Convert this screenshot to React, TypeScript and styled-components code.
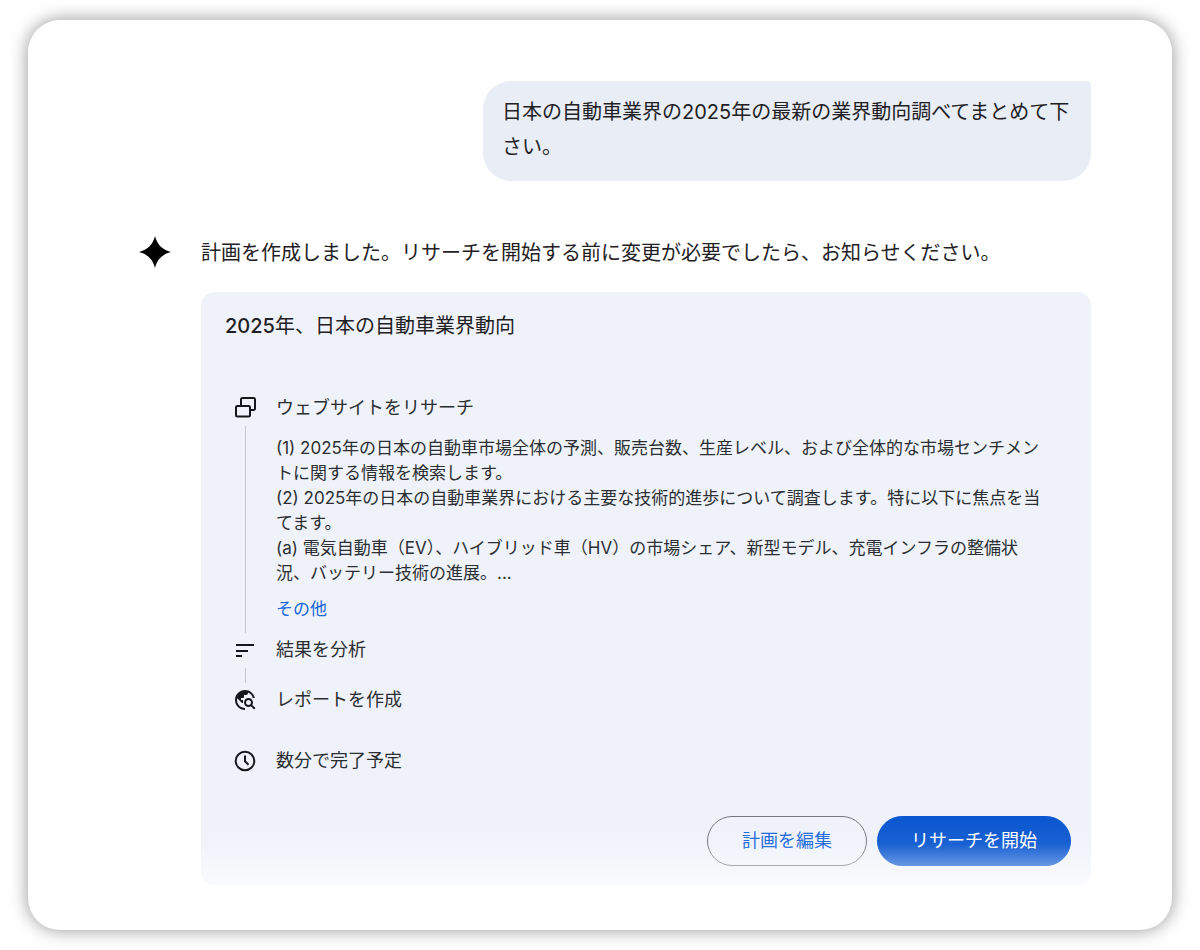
import React from "react";
import styled, { createGlobalStyle } from "styled-components";
import { MdTravelExplore } from "react-icons/md";

const GlobalStyle = createGlobalStyle`
  *, *::before, *::after { box-sizing: border-box; }
  body {
    margin: 0;
    background: #fff;
    color: #1f2124;
    font-family: Inter, "Noto Sans CJK JP", sans-serif;
    font-weight: 370;
  }
`;

const Page = styled.div`
  display: flex;
  flex-direction: column;
  min-height: 100vh;
  padding: 20px 28px;
`;

const Frame = styled.main`
  flex: 1;
  display: flex;
  flex-direction: column;
  padding: 61px 81px 45px 111px;
  border-radius: 32px;
  background: #fff;
  box-shadow: 0 0 18px rgba(0, 0, 0, 0.42);
`;

const UserMessage = styled.p`
  align-self: flex-end;
  max-width: 608px;
  margin: 0;
  padding: 14px 16px 16px 19px;
  border-radius: 28px 4px 28px 28px;
  background: #e8edf6;
  font-size: 20px;
  line-height: 35px;
`;

const Reply = styled.section`
  display: grid;
  grid-template-columns: 32px 1fr;
  column-gap: 30px;
  margin-top: 55px;
`;

const Spark = styled.svg`
  width: 32px;
  height: 32px;
`;

const Intro = styled.p`
  margin: 0 0 22px;
  font-size: 20px;
  line-height: 34px;
`;

const PlanCard = styled.article`
  position: relative;
  grid-column: 2;
  padding: 19px 20px 19px 24px;
  border-radius: 14px;
  background: #eff3f9;
  overflow: hidden;
`;

const Fade = styled.div`
  position: absolute;
  inset: auto 0 0;
  height: 66px;
  background: linear-gradient(
    rgba(255, 255, 255, 0),
    rgba(255, 255, 255, 0.06) 38%,
    rgba(255, 255, 255, 0.65)
  );
  pointer-events: none;
`;

const Title = styled.h2`
  margin: 0 0 55px;
  font-size: 20px;
  font-weight: 370;
  line-height: 30px;
`;

const Year = styled.span`
  font-weight: 500;
`;

const Steps = styled.ol`
  margin: 0;
  padding: 0;
  list-style: none;
`;

const Row = styled.li`
  display: grid;
  grid-template-columns: 24px 1fr;
  column-gap: 19px;
  padding-left: 8px;
`;

const Rail = styled.div`
  display: flex;
  flex-direction: column;
  align-items: center;

  svg {
    flex: none;
    width: 24px;
    height: 24px;
  }
`;

const Connector = styled.span`
  flex: 1;
  width: 1px;
  margin: 6px 0 5px;
  background: #c4c7cc;
`;

const StepBody = styled.div<{ $space: number }>`
  padding-bottom: ${(p) => p.$space}px;
`;

const Label = styled.h3`
  margin: 0;
  color: #2b2e32;
  font-size: 18px;
  font-weight: 370;
  line-height: 24px;
`;

const Detail = styled.p`
  margin: 16px 0 11px;
  color: #2b2e32;
  font-size: 17px;
  line-height: 25px;
`;

const MoreButton = styled.button`
  display: block;
  padding: 0;
  border: 0;
  background: none;
  color: #1a66dc;
  font: inherit;
  font-size: 17px;
  line-height: 24px;
  cursor: pointer;
`;

const Estimate = styled(Row).attrs({ as: "div" })`
  margin: 37px 0 43px;
`;

const Actions = styled.div`
  display: flex;
  justify-content: flex-end;
  gap: 10px;
`;

const ActionButton = styled.button<{ $primary?: boolean }>`
  min-width: 160px;
  height: 50px;
  padding: 0 33px;
  border: 1px solid ${(p) => (p.$primary ? "#0b57d0" : "#74777a")};
  border-radius: 25px;
  background: ${(p) => (p.$primary ? "#0b57d0" : "transparent")};
  color: ${(p) => (p.$primary ? "#fff" : "#1a66dc")};
  font: inherit;
  font-size: 18px;
  line-height: 24px;
  cursor: pointer;
`;

const WindowsIcon = () => (
  <svg viewBox="0 0 24 24" fill="none" stroke="#15171a" strokeWidth="2" strokeLinejoin="round" aria-hidden="true">
    <rect x="3" y="10" width="14" height="10.500" rx="1.500" />
    <path d="M8 10V3.500A1.500 1.500 0 0 1 9.500 2H20.500A1.500 1.500 0 0 1 22 3.500V12.500A1.500 1.500 0 0 1 20.500 14H17" />
  </svg>
);

const LinesIcon = () => (
  <svg viewBox="0 0 24 24" fill="none" stroke="#15171a" strokeWidth="2" aria-hidden="true">
    <path d="M3 7h18M3 13h12M3 18h6" />
  </svg>
);

const ClockIcon = () => (
  <svg viewBox="0 0 24 24" fill="none" stroke="#15171a" strokeWidth="2" aria-hidden="true">
    <circle cx="12" cy="12" r="9.300" />
    <path d="M12 6.500V12.300L15.500 15.800" />
  </svg>
);

const detailLines = [
  "(1) 2025年の日本の自動車市場全体の予測、販売台数、生産レベル、および全体的な市場センチメン",
  "トに関する情報を検索します。",
  "(2) 2025年の日本の自動車業界における主要な技術的進歩について調査します。特に以下に焦点を当",
  "てます。",
  "(a) 電気自動車（EV）、ハイブリッド車（HV）の市場シェア、新型モデル、充電インフラの整備状",
  "況、バッテリー技術の進展。...",
];

export default function App() {
  return (
    <Page lang="ja">
      <GlobalStyle />
      <Frame>
        <UserMessage>日本の自動車業界の2025年の最新の業界動向調べてまとめて下さい。</UserMessage>
        <Reply>
          <Spark viewBox="0 0 32 32" aria-hidden="true">
            <path d="M16 0C18 8.500 23.500 14 32 16C23.500 18 18 23.500 16 32C14 23.500 8.500 18 0 16C8.500 14 14 8.500 16 0Z" fill="#000" />
          </Spark>
          <Intro>計画を作成しました。リサーチを開始する前に変更が必要でしたら、お知らせください。</Intro>
          <PlanCard>
            <Title>
              <Year>2025</Year>年、日本の自動車業界動向
            </Title>
            <Steps>
              <Row>
                <Rail>
                  <WindowsIcon />
                  <Connector />
                </Rail>
                <StepBody $space={17}>
                  <Label>ウェブサイトをリサーチ</Label>
                  <Detail>
                    {detailLines.map((line, i) => (
                      <React.Fragment key={line}>
                        {i > 0 && <br />}
                        {line}
                      </React.Fragment>
                    ))}
                  </Detail>
                  <MoreButton type="button">その他</MoreButton>
                </StepBody>
              </Row>
              <Row>
                <Rail>
                  <LinesIcon />
                  <Connector />
                </Rail>
                <StepBody $space={26}>
                  <Label>結果を分析</Label>
                </StepBody>
              </Row>
              <Row>
                <Rail>
                  <MdTravelExplore color="#15171a" />
                </Rail>
                <Label>レポートを作成</Label>
              </Row>
            </Steps>
            <Estimate>
              <Rail>
                <ClockIcon />
              </Rail>
              <Label>数分で完了予定</Label>
            </Estimate>
            <Actions>
              <ActionButton type="button">計画を編集</ActionButton>
              <ActionButton type="button" $primary>
                リサーチを開始
              </ActionButton>
            </Actions>
            <Fade />
          </PlanCard>
        </Reply>
      </Frame>
    </Page>
  );
}
